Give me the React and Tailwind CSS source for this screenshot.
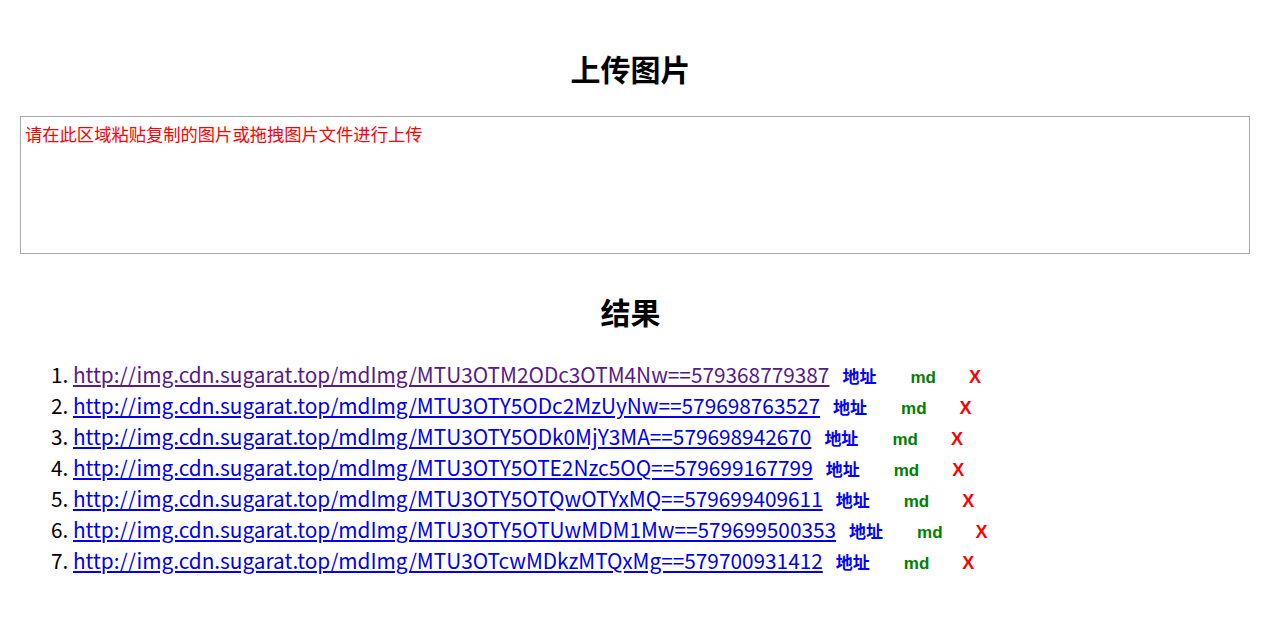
const links = [
  'http://img.cdn.sugarat.top/mdImg/MTU3OTM2ODc3OTM4Nw==579368779387',
  'http://img.cdn.sugarat.top/mdImg/MTU3OTY5ODc2MzUyNw==579698763527',
  'http://img.cdn.sugarat.top/mdImg/MTU3OTY5ODk0MjY3MA==579698942670',
  'http://img.cdn.sugarat.top/mdImg/MTU3OTY5OTE2Nzc5OQ==579699167799',
  'http://img.cdn.sugarat.top/mdImg/MTU3OTY5OTQwOTYxMQ==579699409611',
  'http://img.cdn.sugarat.top/mdImg/MTU3OTY5OTUwMDM1Mw==579699500353',
  'http://img.cdn.sugarat.top/mdImg/MTU3OTcwMDkzMTQxMg==579700931412',
]

export default function App() {
  return (
    <div className="min-h-[618px] bg-white pt-[48px] font-['Noto_Sans_CJK_SC',sans-serif] text-black">
      <h1 className="text-center text-[30px] font-bold leading-[40px]">上传图片</h1>
      <div className="ml-[20px] mr-[11px] mt-[28px] h-[138px] border border-[#a9a9a9] px-[4px] pt-[4px] text-[17.3px] leading-[26px] text-[#ff0000]">
        请在此区域粘贴复制的图片或拖拽图片文件进行上传
      </div>
      <h2 className="mt-[37px] text-center text-[30px] font-bold leading-[40px]">结果</h2>
      <ol className="mt-[28px] list-decimal pl-[73px] text-[20.8px] leading-[31px]">
        {links.map((url, i) => (
          <li key={url} className="h-[31px]">
            <a
              href="#"
              className={i === 0 ? 'text-[#551a8b] underline' : 'text-[#0000ee] underline'}
            >
              {url}
            </a>
            <span className="ml-[13px] font-['Liberation_Sans','Noto_Sans_CJK_SC',sans-serif] text-[17px] font-bold leading-none text-[#0000ff]">地址</span>
            <span className="ml-[34px] font-['Liberation_Sans',sans-serif] text-[17px] font-bold leading-none text-[#008000]">md</span>
            <span className="ml-[33px] font-['Liberation_Sans',sans-serif] text-[18px] font-bold leading-none text-[#ff0000]">X</span>
          </li>
        ))}
      </ol>
    </div>
  )
}
